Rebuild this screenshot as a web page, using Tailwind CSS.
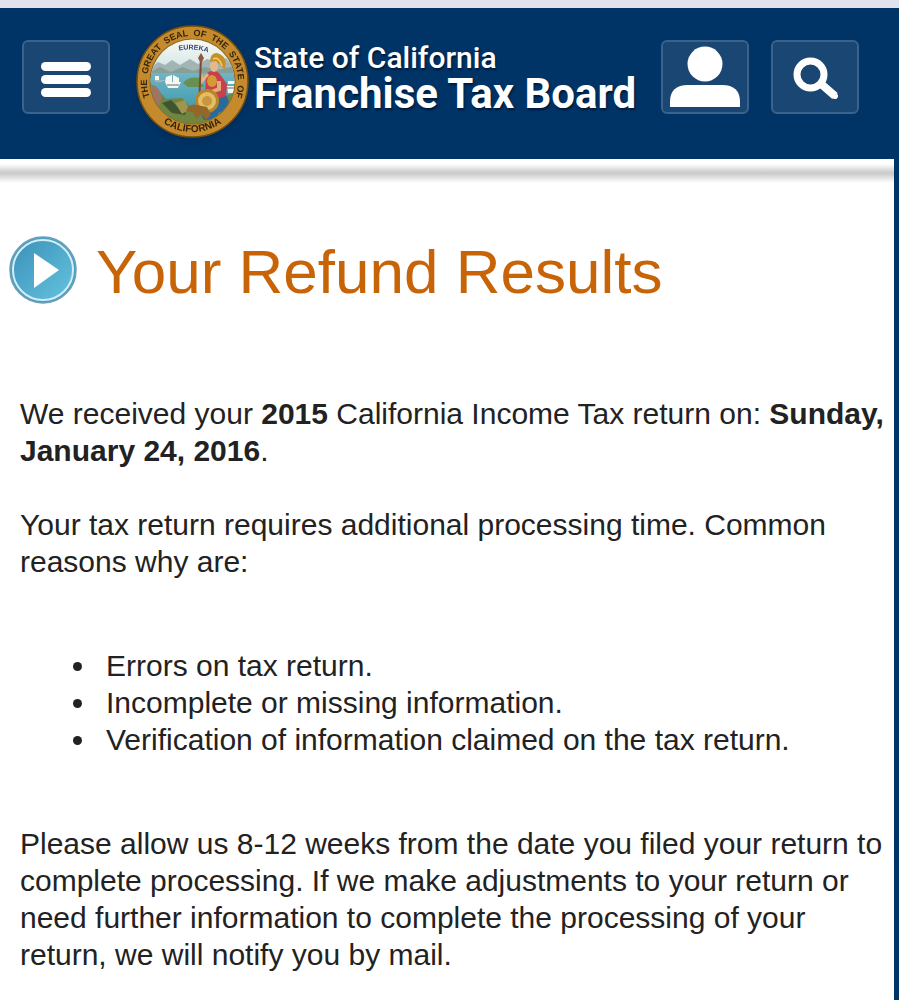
<!DOCTYPE html>
<html lang="en">
<head>
    <meta charset="UTF-8">
    <meta name="viewport" content="width=device-width, initial-scale=1.0">
    <title>Your Refund Results - Franchise Tax Board</title>
    <script src="https://cdn.jsdelivr.net/npm/@tailwindcss/browser@4"></script>
</head>
<body class="flex min-h-screen flex-col bg-[#003366] font-['Liberation_Sans',Arial,sans-serif] text-[#222222]">
    <div class="h-2 bg-[#e0e3ee]"></div>
    <header class="flex items-start justify-between bg-[#003366] pt-4 pb-5 pl-[22px] pr-10">
        <button type="button" aria-label="Menu" class="mt-4 flex h-[74px] w-[88px] shrink-0 items-center justify-center rounded-md border-2 border-[#3a628b] bg-[#1a4673]">
            <svg class="h-10 w-[50px]" viewBox="0 0 50 40" fill="#fff">
                <rect x="0" y="5" width="50" height="9" rx="4.5"/>
                <rect x="0" y="18" width="50" height="9" rx="4.5"/>
                <rect x="0" y="31" width="50" height="9" rx="4.5"/>
            </svg>
        </button>
        <a href="#" class="flex items-start gap-1 text-white">
            <!-- State seal -->
            <svg class="h-[115px] w-[115px] shrink-0 drop-shadow-md" viewBox="0 0 115 115" role="img" aria-label="The Great Seal of the State of California">
                <defs>
                    <clipPath id="sealClip"><circle cx="57.5" cy="57.5" r="42"/></clipPath>
                    <linearGradient id="sky" x1="0" y1="0" x2="0" y2="1">
                        <stop offset="0" stop-color="#fbfaf0"/>
                        <stop offset="1" stop-color="#c3dfe6"/>
                    </linearGradient>
                    <linearGradient id="water" x1="0" y1="0" x2="0" y2="1">
                        <stop offset="0" stop-color="#70b5c5"/>
                        <stop offset="1" stop-color="#2c91a8"/>
                    </linearGradient>
                    <path id="sealTop" d="M18 80 A45.500 45.500 0 1 1 97 80"/>
                    <path id="sealBottom" d="M17 88 A51 51 0 0 0 98 88"/>
                    <path id="sealMotto" d="M39 28 Q57.500 22 78 30"/>
                </defs>
                <circle cx="57.5" cy="57.5" r="55.500" fill="#c58a2b" stroke="#76500f" stroke-width="1.500"/>
                <circle cx="57.5" cy="57.5" r="43" fill="#8a6a2b"/>
                <g clip-path="url(#sealClip)">
                    <rect x="15" y="15" width="85" height="40" fill="url(#sky)"/>
                    <path d="M15 45 L23 38 L30 41 L37 36 L45 41 L55 35 L63 40 L72 35 L84 38 L91 34 L100 46 V58 H15Z" fill="#a3b4b4"/>
                    <path d="M15 48 L25 43 L36 48 L47 43 L58 47 L70 43 L82 46 L100 42 V56 H15Z" fill="#84a098"/>
                    <rect x="15" y="49" width="85" height="51" fill="url(#water)"/>
                    <path d="M48 59 Q54 52 65 54 L69 63 H53Z" fill="#689151"/>
                    <path d="M15 66 L24 67 L31 75 L47 74 L55 82 L68 79 L100 69 V100 H15Z" fill="#71853e"/>
                    <path d="M16 60 L22 63 L27 72 L24 83 L18 78Z" fill="#9d7565"/>
                    <path d="M27 79 L36 76 L43 83 L52 84 L50 91 L37 89Z" fill="#3e552f"/>
                    <path d="M40 79 L50 76 L54 86 L47 90Z" fill="#9c9650"/>
                    <g fill="#f7f7ef">
                        <path d="M30 58 H46 L43 64 H33Z"/>
                        <path d="M31 53 L37 51 V58 H30Z M38 51 L44 54 V58 H38Z"/>
                        <path d="M19 56 H29 L27 58 H20Z M20 52 H24 V56 H20Z"/>
                        <path d="M92 62 H102 L98 69 H93Z"/>
                        <path d="M93 57 H101 V60 H93Z"/>
                    </g>
                    <path d="M32 61 H44 M19 57 H28 M92 64 H101" stroke="#58707a" stroke-width="1"/>
                    <!-- Minerva with spear, shield and bear -->
                    <path d="M66 71 L76 63 L90 68 L94 78 L86 95 L69 96 L61 81Z" fill="#29699c"/>
                    <path d="M71 50 Q77 44 84 49 L92 60 L91 72 L83 75 L70 70Z" fill="#c7404c"/>
                    <path d="M73 50 L67 57 L66 50" fill="none" stroke="#e3b782" stroke-width="3"/>
                    <path d="M84 57 L84 65 L76 68" fill="none" stroke="#e2ac78" stroke-width="4"/>
                    <ellipse cx="77" cy="57" rx="5" ry="6" fill="#d59a35"/>
                    <ellipse cx="79" cy="42" rx="4" ry="6" fill="#e4b98a"/>
                    <path d="M75 38 Q75 29 82 29 Q93 32 90 45 L86 42 L81 37Z" fill="#c69025"/>
                    <path d="M78 35 Q84 32 87 42" fill="none" stroke="#f2d16a" stroke-width="1.500"/>
                    <path d="M66 33 L64 83" stroke="#7b4932" stroke-width="2"/>
                    <path d="M66 29 L69 34 L66 40 L63 34Z" fill="#925640"/>
                    <circle cx="72" cy="77" r="12" fill="#b9852a"/>
                    <circle cx="72" cy="77" r="9" fill="#e1bf65"/>
                    <circle cx="72" cy="77" r="5" fill="#cc9540"/>
                    <path d="M51 87 Q54 79 62 81 L72 83 L76 91 L71 96 L66 90 L61 95 L58 88Z" fill="#936629"/>
                    <path d="M83 89 L91 86 L95 92 L84 100Z" fill="#758c43"/>
                </g>
                <g font-family="Liberation Sans, Arial, sans-serif" font-weight="bold" fill="#35250c" text-anchor="middle">
                    <text font-size="9"><textPath href="#sealTop" startOffset="50%">THE&#160; GREAT&#160; SEAL&#160; OF&#160; THE&#160; STATE&#160; OF</textPath></text>
                    <text font-size="10"><textPath href="#sealBottom" startOffset="50%">CALIFORNIA</textPath></text>
                    <text font-size="7" fill="#34417c"><textPath href="#sealMotto" startOffset="50%">EUREKA</textPath></text>
                </g>
            </svg>
            <span class="flex flex-col pt-4 font-['Roboto',sans-serif] text-shadow-[1px_2px_2px_#001a38]">
                <span class="text-[30px] leading-9 font-medium">State of California</span>
                <span class="text-[42px] leading-9 font-bold">Franchise Tax Board</span>
            </span>
        </a>
        <div class="mt-4 flex gap-[22px]">
            <button type="button" aria-label="My account" class="flex h-[74px] w-[88px] items-center justify-center rounded-md border-2 border-[#3a628b] bg-[#1a4673]">
                <svg class="h-[62px] w-[70px]" viewBox="0 0 70 62" fill="#fff">
                    <circle cx="35" cy="18" r="17.500"/>
                    <path d="M0 61 V56 Q0 39 18 39 H52 Q70 39 70 56 V61Z"/>
                </svg>
            </button>
            <button type="button" aria-label="Search" class="flex h-[74px] w-[88px] items-center justify-center rounded-md border-2 border-[#3a628b] bg-[#1a4673]">
                <svg class="h-[44px] w-[46px]" viewBox="0 0 46 44" fill="none" stroke="#fff">
                    <circle cx="18.500" cy="19.500" r="13.500" stroke-width="7"/>
                    <path d="M28 28 L43 41" stroke-width="8"/>
                    <path d="M40 38.500 L43 41" stroke-width="6" stroke-linecap="round"/>
                </svg>
            </button>
        </div>
    </header>
    <main class="mr-[5px] grow bg-white">
        <div class="pt-1">
            <div class="h-5 bg-linear-to-b from-white from-5% via-[#c9c9c9] via-50% to-white"></div>
        </div>
        <div class="flex items-center gap-[18px] pt-[50px] pl-2">
            <svg class="h-[70px] w-[70px] shrink-0" viewBox="0 0 70 70" aria-hidden="true">
                <defs>
                    <linearGradient id="play" x1="0" y1="0" x2="1" y2="1">
                        <stop offset="0" stop-color="#3b91b9"/>
                        <stop offset="1" stop-color="#65c3df"/>
                    </linearGradient>
                </defs>
                <circle cx="35" cy="35" r="33" fill="#4d9fc2" stroke="#6d9fb8" stroke-width="1.500"/>
                <circle cx="35" cy="35" r="30" fill="url(#play)" stroke="#d3eef7" stroke-width="2"/>
                <path d="M26 18 L51 35 L26 53Z" fill="#fff"/>
            </svg>
            <h1 class="pt-1 text-[62px] leading-[70px] text-[#c86408]">Your Refund Results</h1>
        </div>
        <div class="pt-[88px] pl-5 text-[30px] leading-[37px]">
            <p>We received your <b>2015</b> California Income Tax return on: <b>Sunday, January 24, 2016</b>.</p>
            <p class="mt-[37px]">Your tax return requires additional processing time. Common reasons why are:</p>
            <ul class="my-[67px] list-disc pl-[78px]">
                <li class="pl-2">Errors on tax return.</li>
                <li class="pl-2">Incomplete or missing information.</li>
                <li class="pl-2">Verification of information claimed on the tax return.</li>
            </ul>
            <p>Please allow us 8-12 weeks from the date you filed your return to complete processing. If we make adjustments to your return or need further information to complete the processing of your return, we will notify you by mail.</p>
        </div>
    </main>
</body>
</html>
